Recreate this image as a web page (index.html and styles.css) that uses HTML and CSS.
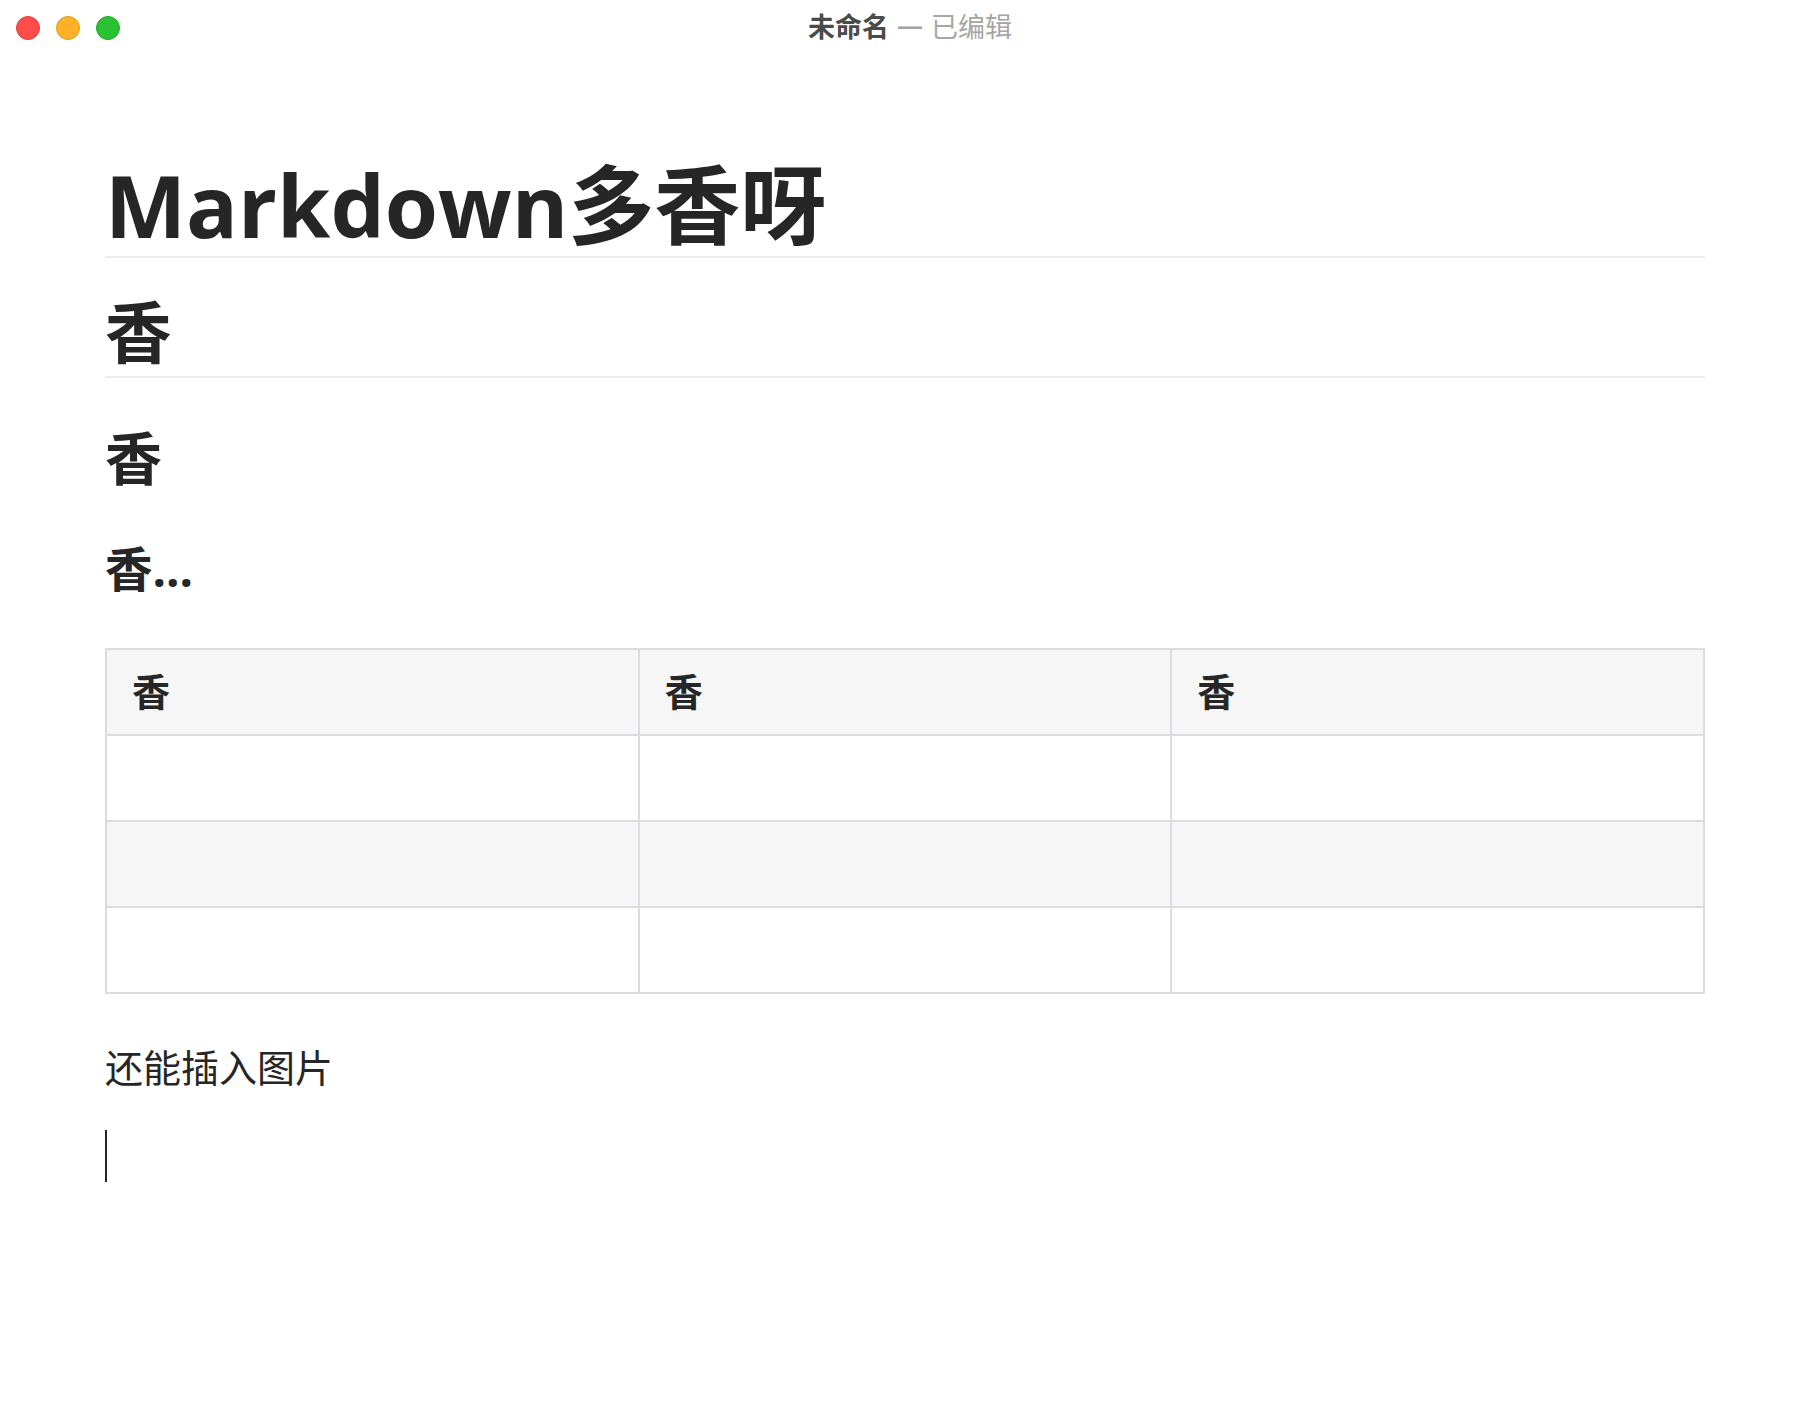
FILE: index.html
```html
<!DOCTYPE html>
<html lang="zh-CN">
<head>
<meta charset="utf-8">
<title>未命名</title>
<link rel="stylesheet" href="styles.css">
</head>
<body>
<div class="window">
  <header class="titlebar">
    <div class="lights">
      <span class="light close"></span>
      <span class="light minimize"></span>
      <span class="light zoom"></span>
    </div>
    <div class="title">
      <span class="doc-name">未命名</span>
      <span class="sep">—</span>
      <span class="state">已编辑</span>
    </div>
    <div class="spacer"></div>
  </header>
  <main class="write">
    <h1 class="h1">Markdown多香呀</h1>
    <h2 class="h2">香</h2>
    <h3 class="h3">香</h3>
    <h4 class="h4">香...</h4>
    <table class="md-table">
      <thead>
        <tr><th>香</th><th>香</th><th>香</th></tr>
      </thead>
      <tbody>
        <tr><td></td><td></td><td></td></tr>
        <tr><td></td><td></td><td></td></tr>
        <tr><td></td><td></td><td></td></tr>
      </tbody>
    </table>
    <p class="para">还能插入图片</p>
    <div class="caret"></div>
  </main>
</div>
</body>
</html>
```

FILE: styles.css
```css
html, body {
  margin: 0;
  padding: 0;
  background: #ffffff;
}

body {
  font-family: "Open Sans", "Noto Sans CJK SC", sans-serif;
  color: #262626;
}

.window {
  width: 1810px;
  min-height: 1422px;
  background: #ffffff;
}

.titlebar {
  height: 56px;
  display: grid;
  grid-template-columns: 1fr auto 1fr;
  align-items: center;
}

.lights {
  display: flex;
  gap: 16px;
  padding-left: 16px;
}

.light {
  width: 24px;
  height: 24px;
  border-radius: 50%;
  box-sizing: border-box;
}

.light.close {
  background: #fd4d4b;
  border: 1px solid #e2403d;
}

.light.minimize {
  background: #feb126;
  border: 1px solid #e09c1c;
}

.light.zoom {
  background: #2ac233;
  border: 1px solid #1fa928;
}

.title {
  display: flex;
  align-items: center;
  gap: 9px;
  padding-left: 10px;
  padding-bottom: 4px;
  font-family: "Noto Sans CJK SC", sans-serif;
  font-size: 27px;
  line-height: 30px;
  white-space: nowrap;
}

.doc-name {
  font-weight: 700;
  color: #4b4b4b;
}

.sep {
  color: #a3a3a3;
  font-family: "Liberation Sans", "Noto Sans CJK SC", sans-serif;
  font-weight: 700;
  font-size: 24px;
  vertical-align: -2px;
}

.state {
  color: #a6a6a6;
}

.write {
  padding: 96.5px 105px 0 105px;
}

.h1, .h2, .h3, .h4 {
  font-weight: 700;
  margin: 0;
  color: #262626;
}

.h1 {
  font-size: 86px;
  line-height: 103.5px;
  border-bottom: 2px solid #ececec;
}

.h2 {
  margin-top: 32.2px;
  font-size: 66.5px;
  line-height: 85.8px;
  border-bottom: 2px solid #ececec;
}

.h3 {
  margin-top: 38.9px;
  font-size: 57px;
  line-height: 82px;
}

.h4 {
  margin-top: 37.4px;
  font-size: 47.5px;
  line-height: 66.5px;
}

.md-table {
  margin-top: 45.2px;
  width: 100%;
  table-layout: fixed;
  border-collapse: separate;
  border-spacing: 0;
  border-top: 2px solid #dadcdf;
  border-left: 2px solid #dadcdf;
}

.md-table th,
.md-table td {
  width: 33.333%;
  height: 84px;
  padding: 0 25px;
  border-right: 2px solid #dadcdf;
  border-bottom: 2px solid #dadcdf;
  text-align: left;
  vertical-align: middle;
  font-size: 38px;
  line-height: 61px;
}

.md-table th {
  font-weight: 700;
}

.md-table thead tr,
.md-table tbody tr:nth-child(2) {
  background: #f6f6f6;
}

.para {
  margin: 42.8px 0 0 0;
  font-size: 38px;
  line-height: 61px;
  color: #262626;
}

.caret {
  margin-top: 32.2px;
  width: 2px;
  height: 52px;
  background: #262626;
}
```
